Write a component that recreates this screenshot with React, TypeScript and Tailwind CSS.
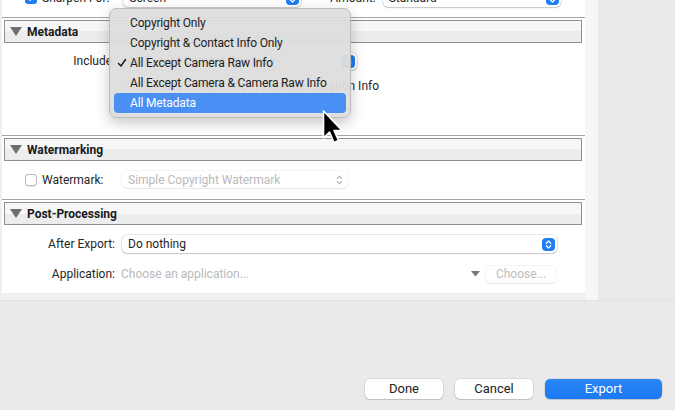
import React from "react";

const Stepper = () => (
  <span className="flex h-[13px] w-[13px] shrink-0 items-center justify-center rounded-[4px] bg-[#1e7df4]">
    <svg width="7" height="9" viewBox="0 0 7 9" fill="none" stroke="white" strokeWidth="1.3" strokeLinecap="round" strokeLinejoin="round">
      <path d="M1.3 3.2 L3.5 1 L5.7 3.2" />
      <path d="M1.3 5.8 L3.5 8 L5.7 5.8" />
    </svg>
  </span>
);

const GrayStepper = () => (
  <svg width="7" height="10" viewBox="0 0 7 10" fill="none" stroke="#b4b4b4" strokeWidth="1.1" strokeLinecap="round" strokeLinejoin="round">
    <path d="M1.3 3.5 L3.5 1.2 L5.7 3.5" />
    <path d="M1.3 6.5 L3.5 8.8 L5.7 6.5" />
  </svg>
);

const Popup = ({ text, className }: { text: string; className: string }) => (
  <div
    className={
      "flex h-[18px] items-center justify-between rounded-[5px] bg-white pl-[6px] pr-[2px] text-[12px] text-[#1f1f1f] shadow-[0_0_0_0.5px_rgba(0,0,0,0.18),0_1px_1.5px_rgba(0,0,0,0.15)] " +
      className
    }
  >
    <span>{text}</span>
    <Stepper />
  </div>
);

const Checkbox = ({ checked }: { checked?: boolean }) =>
  checked ? (
    <span className="flex h-[12px] w-[12px] shrink-0 items-center justify-center rounded-[3px] bg-[#1e7df4]">
      <svg width="8" height="8" viewBox="0 0 8 8" fill="none" stroke="white" strokeWidth="1.5">
        <path d="M1 4 L3.2 6.2 L7 1.5" />
      </svg>
    </span>
  ) : (
    <span className="h-[12px] w-[12px] shrink-0 rounded-[3px] border border-[#b9b9b9] bg-white shadow-[0_0.5px_1px_rgba(0,0,0,0.08)]" />
  );

const SectionHeader = ({ title }: { title: string }) => (
  <div className="border-t border-[#a5a5a5] pt-[2px]">
    <div className="ml-[2px] mr-[3px] flex h-[23px] items-center gap-[5px] border border-[#8f8f8f] bg-[linear-gradient(#f7f7f7_50%,#ececec_50%)] pl-[5px]">
      <svg width="12" height="9" viewBox="0 0 12 9">
        <path d="M0 0 H12 L6 9 Z" fill="#6e6e6e" />
      </svg>
      <span className="text-[12px] font-bold text-[#1a1a1a]">{title}</span>
    </div>
  </div>
);

const Label = ({ text }: { text: string }) => (
  <span className="w-[113px] shrink-0 text-right text-[12px] text-[#262626]">{text}</span>
);

const menuItems = [
  "Copyright Only",
  "Copyright & Contact Info Only",
  "All Except Camera Raw Info",
  "All Except Camera & Camera Raw Info",
  "All Metadata",
];

export default function App() {
  return (
    <div className="relative flex h-[410px] w-[675px] flex-col overflow-hidden bg-[#eaeaea] font-[family-name:Roboto,sans-serif] text-[#262626]">
      <div className="flex h-[301px] shrink-0 border-b border-[#e2e2e2] bg-[#efefef]">
        <div className="ml-[2px] flex h-[293px] w-[583px] flex-col bg-white">
          {/* partly scrolled-off row */}
          <div className="h-[17px] overflow-hidden">
            <div className="mt-[-12px] flex h-[20px] items-center">
              <div className="ml-[23px] flex items-center gap-[5px]">
                <Checkbox checked />
                <span className="text-[12px]">Sharpen For:</span>
              </div>
              <Popup text="Screen" className="ml-[14px] w-[178px]" />
              <span className="ml-[29px] text-[12px]">Amount:</span>
              <Popup text="Standard" className="ml-[7px] w-[178px]" />
            </div>
          </div>

          <SectionHeader title="Metadata" />
          <div className="flex h-[92px] flex-col gap-[5px] pt-[8px]">
            <div className="flex h-[20px] items-center gap-[7px]">
              <Label text="Include:" />
              <Popup text="All Except Camera Raw Info" className="w-[235px]" />
            </div>
            <div className="flex h-[20px] items-center pl-[121px]">
              <Checkbox />
              <span className="ml-[5px] text-[12px]">Remove Person Info</span>
              <span className="ml-[8px]">
                <Checkbox />
              </span>
              <span className="ml-[5px] text-[12px]">Remove Location Info</span>
            </div>
          </div>

          <SectionHeader title="Watermarking" />
          <div className="flex h-[38px] items-center pb-[1px]">
            <div className="ml-[23px] flex w-[97px] items-center gap-[5px]">
              <Checkbox />
              <span className="text-[12px]">Watermark:</span>
            </div>
            <div className="flex h-[17px] w-[226px] items-center justify-between rounded-[5px] bg-white pl-[6px] pr-[5px] text-[12px] text-[#b9b9b9] shadow-[0_0_0_0.5px_rgba(0,0,0,0.08),0_1px_1px_rgba(0,0,0,0.06)]">
              <span>Simple Copyright Watermark</span>
              <GrayStepper />
            </div>
          </div>

          <SectionHeader title="Post-Processing" />
          <div className="flex flex-col gap-[10px] pt-[9px]">
            <div className="flex h-[20px] items-center gap-[7px]">
              <Label text="After Export:" />
              <Popup text="Do nothing" className="w-[435px]" />
            </div>
            <div className="flex h-[20px] items-center gap-[6px]">
              <Label text="Application:" />
              <span className="w-[344px] text-[12px] text-[#b9b9b9]">Choose an application...</span>
              <svg width="9" height="6" viewBox="0 0 9 6">
                <path d="M0 0 H9 L4.5 5.5 Z" fill="#777" />
              </svg>
              <div className="flex h-[17px] w-[70px] items-center justify-center rounded-[4px] bg-white text-[12px] text-[#bdbdbd] shadow-[0_0_0_0.5px_rgba(0,0,0,0.08),0_1px_1px_rgba(0,0,0,0.06)]">
                Choose...
              </div>
            </div>
          </div>
        </div>
        <div className="h-[300px] w-[13px] bg-[#f7f7f7]" />
        <div className="flex-1 bg-[#eaeaea]" />
      </div>

      <div className="flex-1" />
      <div className="mb-[11px] mr-[13px] flex justify-end gap-[12px] text-[13px]">
        <button className="h-[20px] w-[78px] rounded-[5px] bg-white text-[#222] shadow-[0_0_0_0.5px_rgba(0,0,0,0.15),0_1px_1px_rgba(0,0,0,0.12)]">
          Done
        </button>
        <button className="h-[20px] w-[78px] rounded-[5px] bg-white text-[#222] shadow-[0_0_0_0.5px_rgba(0,0,0,0.15),0_1px_1px_rgba(0,0,0,0.12)]">
          Cancel
        </button>
        <button className="h-[20px] w-[117px] rounded-[5px] bg-[linear-gradient(#2b86f7,#1a78f2)] text-white shadow-[0_0_0_0.5px_rgba(0,0,0,0.12),0_1px_1px_rgba(0,0,0,0.12)]">
          Export
        </button>
      </div>

      {/* open pop-up menu */}
      <div className="absolute left-[109px] top-[8px] w-[242px] rounded-[7px] border border-[#bcbcbc] bg-[#dddddd]/95 py-[4px] shadow-[0_5px_14px_rgba(0,0,0,0.22)]">
        {menuItems.map((item, i) => (
          <div
            key={item}
            className={
              "relative mx-[4px] flex h-[20px] items-center rounded-[4px] pl-[16px] text-[12px] tracking-[-0.15px] " +
              (i === 4 ? "bg-[#4a8ff3] text-white" : "text-[#1c1c1c]")
            }
          >
            {i === 2 && (
              <svg className="absolute left-[3px] top-[5px]" width="10" height="10" viewBox="0 0 10 10" fill="none" stroke="#1c1c1c" strokeWidth="1.5" strokeLinecap="round" strokeLinejoin="round">
                <path d="M1.5 5.5 L4 8 L8.5 1.5" />
              </svg>
            )}
            {item}
          </div>
        ))}
      </div>

      {/* mouse pointer */}
      <svg className="absolute left-[321px] top-[109px]" width="24" height="38" viewBox="0 0 24 38">
        <path
          d="M2.5 2 L2.5 29 L8.5 23 L13 33.5 L17.5 31.5 L13 21.5 L21 21.5 Z"
          fill="#000"
          stroke="#fff"
          strokeWidth="1.6"
          strokeLinejoin="round"
        />
      </svg>
    </div>
  );
}
